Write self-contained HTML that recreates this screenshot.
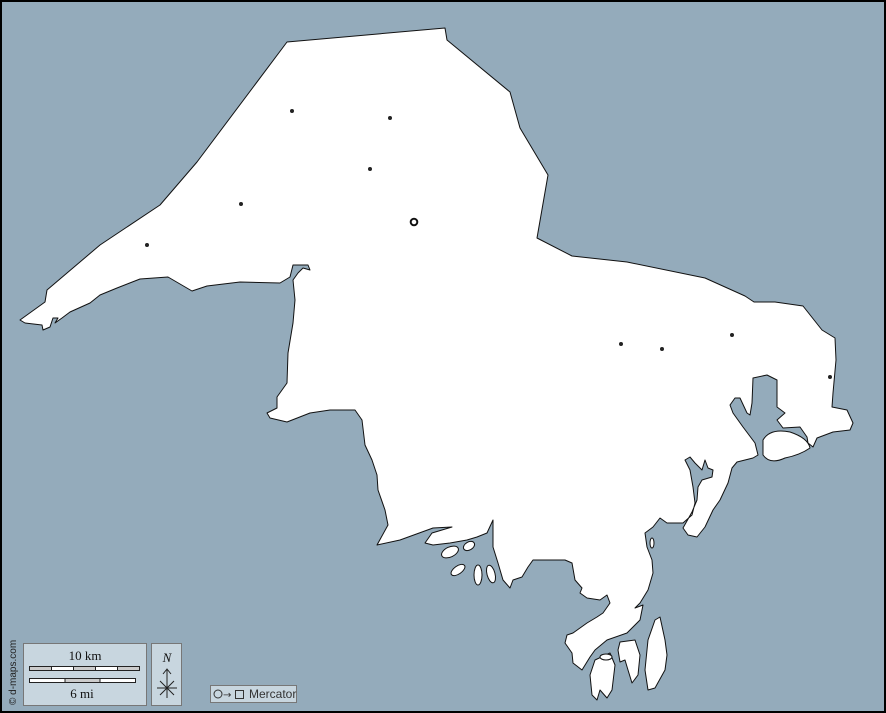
<!DOCTYPE html>
<html><head><meta charset="utf-8"><style>
html,body{margin:0;padding:0;width:886px;height:713px;overflow:hidden;background:#000}
svg{display:block}
</style></head><body>
<svg width="886" height="713" viewBox="0 0 886 713" xmlns="http://www.w3.org/2000/svg">
<rect x="0" y="0" width="886" height="713" fill="#000"/>
<rect x="2" y="2" width="882" height="709" fill="#94abbb"/>
<g fill="#fff" stroke="#111" stroke-width="1" stroke-linejoin="round">
<path d="M287,42 L445,28 L447,40 L510,92 L520,128 L548,175 L537,238 L572,256 L627,262 L705,278 L745,296 L754,302 L775,302 L803,306 L822,330 L835,338 L836,360 L833,393 L832,407 L847,410 L853,423 L850,430 L833,432 L817,438 L813,447 L808,443 L807,437 L800,427 L783,428 L777,420 L785,413 L777,407 L777,380 L767,375 L753,378 L752,403 L750,415 L747,413 L740,398 L735,398 L730,405 L733,413 L743,427 L755,443 L758,455 L753,458 L737,462 L732,468 L728,483 L720,500 L713,510 L705,527 L697,537 L688,535 L683,528 L692,512 L697,500 L698,487 L702,480 L712,477 L713,470 L708,468 L705,460 L702,470 L695,463 L690,457 L685,460 L690,470 L693,487 L695,503 L692,515 L683,523 L667,523 L660,518 L653,527 L645,533 L647,547 L652,560 L653,573 L648,590 L640,603 L635,608 L643,605 L640,620 L627,633 L607,640 L595,650 L590,657 L582,670 L573,663 L572,653 L565,643 L567,635 L573,633 L587,623 L597,617 L603,613 L610,603 L607,595 L600,600 L587,598 L580,593 L582,588 L575,580 L572,563 L565,560 L547,560 L533,560 L528,567 L522,577 L513,580 L510,588 L503,580 L498,563 L493,547 L493,520 L487,533 L477,537 L467,540 L450,543 L433,545 L425,543 L432,533 L452,527 L433,528 L400,540 L377,545 L388,525 L385,510 L378,490 L377,475 L372,460 L365,445 L362,420 L355,410 L330,410 L310,413 L287,422 L270,418 L267,413 L277,408 L277,397 L287,383 L288,353 L293,323 L295,300 L293,280 L298,273 L303,268 L310,270 L308,265 L293,265 L290,277 L280,283 L240,282 L207,286 L192,291 L168,277 L140,279 L117,288 L100,295 L90,303 L70,312 L62,318 L55,323 L58,318 L53,318 L50,327 L43,330 L42,325 L25,323 L20,320 L45,302 L47,290 L100,245 L160,205 L197,162 Z"/>
<path d="M763,440 Q770,428 790,432 Q808,438 810,448 Q800,455 785,458 Q770,465 763,455 Z"/>
<ellipse cx="450" cy="552" rx="9" ry="5" transform="rotate(-25 450 552)"/>
<ellipse cx="469" cy="546" rx="6" ry="4" transform="rotate(-30 469 546)"/>
<ellipse cx="458" cy="570" rx="8" ry="4" transform="rotate(-35 458 570)"/>
<ellipse cx="478" cy="575" rx="4" ry="10"/>
<ellipse cx="491" cy="574" rx="4" ry="9" transform="rotate(-15 491 574)"/>
<ellipse cx="652" cy="543" rx="2" ry="5"/>
<path d="M655,620 L660,617 L665,640 L667,655 L665,670 L655,688 L648,690 L645,670 L648,640 Z"/>
<path d="M620,642 L635,640 L640,655 L638,675 L632,683 L628,670 L625,660 L620,662 L618,650 Z"/>
<path d="M595,660 L610,653 L615,665 L612,690 L607,698 L600,690 L597,700 L592,695 L590,675 Z"/>
<ellipse cx="606" cy="657" rx="6" ry="3"/>
</g>
<g fill="#222">
<circle cx="292" cy="111" r="2"/><circle cx="390" cy="118" r="2"/><circle cx="370" cy="169" r="2"/>
<circle cx="241" cy="204" r="2"/><circle cx="147" cy="245" r="2"/><circle cx="621" cy="344" r="2"/>
<circle cx="662" cy="349" r="2"/><circle cx="732" cy="335" r="2"/><circle cx="830" cy="377" r="2"/>
</g>
<circle cx="414" cy="222" r="3.3" fill="#fff" stroke="#111" stroke-width="2"/>
<text x="16" y="705" transform="rotate(-90 16 705)" font-family="'Liberation Sans', sans-serif" font-size="10" fill="#222">© d-maps.com</text>
<rect x="23.5" y="643.5" width="123" height="62" fill="#c8d6df" stroke="#777"/>
<text x="85" y="660" text-anchor="middle" font-family="'Liberation Serif', serif" font-size="13" fill="#111">10 km</text>
<rect x="29.5" y="666.5" width="110" height="4" fill="#fff" stroke="#222"/>
<g fill="#ccc" stroke="#222" stroke-width="1"><rect x="29.5" y="666.5" width="22" height="4"/><rect x="73.5" y="666.5" width="22" height="4"/><rect x="117.5" y="666.5" width="22" height="4"/></g>
<rect x="29.5" y="678.5" width="106" height="4" fill="#fff" stroke="#222"/>
<rect x="65" y="678.5" width="35" height="4" fill="#ccc" stroke="#222"/>
<text x="82" y="698" text-anchor="middle" font-family="'Liberation Serif', serif" font-size="13" fill="#111">6 mi</text>
<rect x="151.5" y="643.5" width="30" height="62" fill="#c8d6df" stroke="#777"/>
<text x="167" y="662" text-anchor="middle" font-family="'Liberation Serif', serif" font-style="italic" font-size="13" fill="#111">N</text>
<g stroke="#222" stroke-width="1" fill="none"><path d="M167,670 V698 M163,674 L167,669 L171,674 M157,688 H177 M160,681 L174,695 M174,681 L160,695"/></g>
<rect x="210.5" y="685.5" width="86" height="17" fill="#c8d6df" stroke="#777"/>
<circle cx="218" cy="694" r="4" fill="none" stroke="#333"/>
<text x="223" y="698" font-family="'DejaVu Sans', sans-serif" font-size="10" fill="#333">→</text>
<rect x="235.5" y="690.5" width="8" height="8" fill="none" stroke="#333"/>
<text x="249" y="698" font-family="'Liberation Sans', sans-serif" font-size="12" fill="#333">Mercator</text>
</svg>
</body></html>
